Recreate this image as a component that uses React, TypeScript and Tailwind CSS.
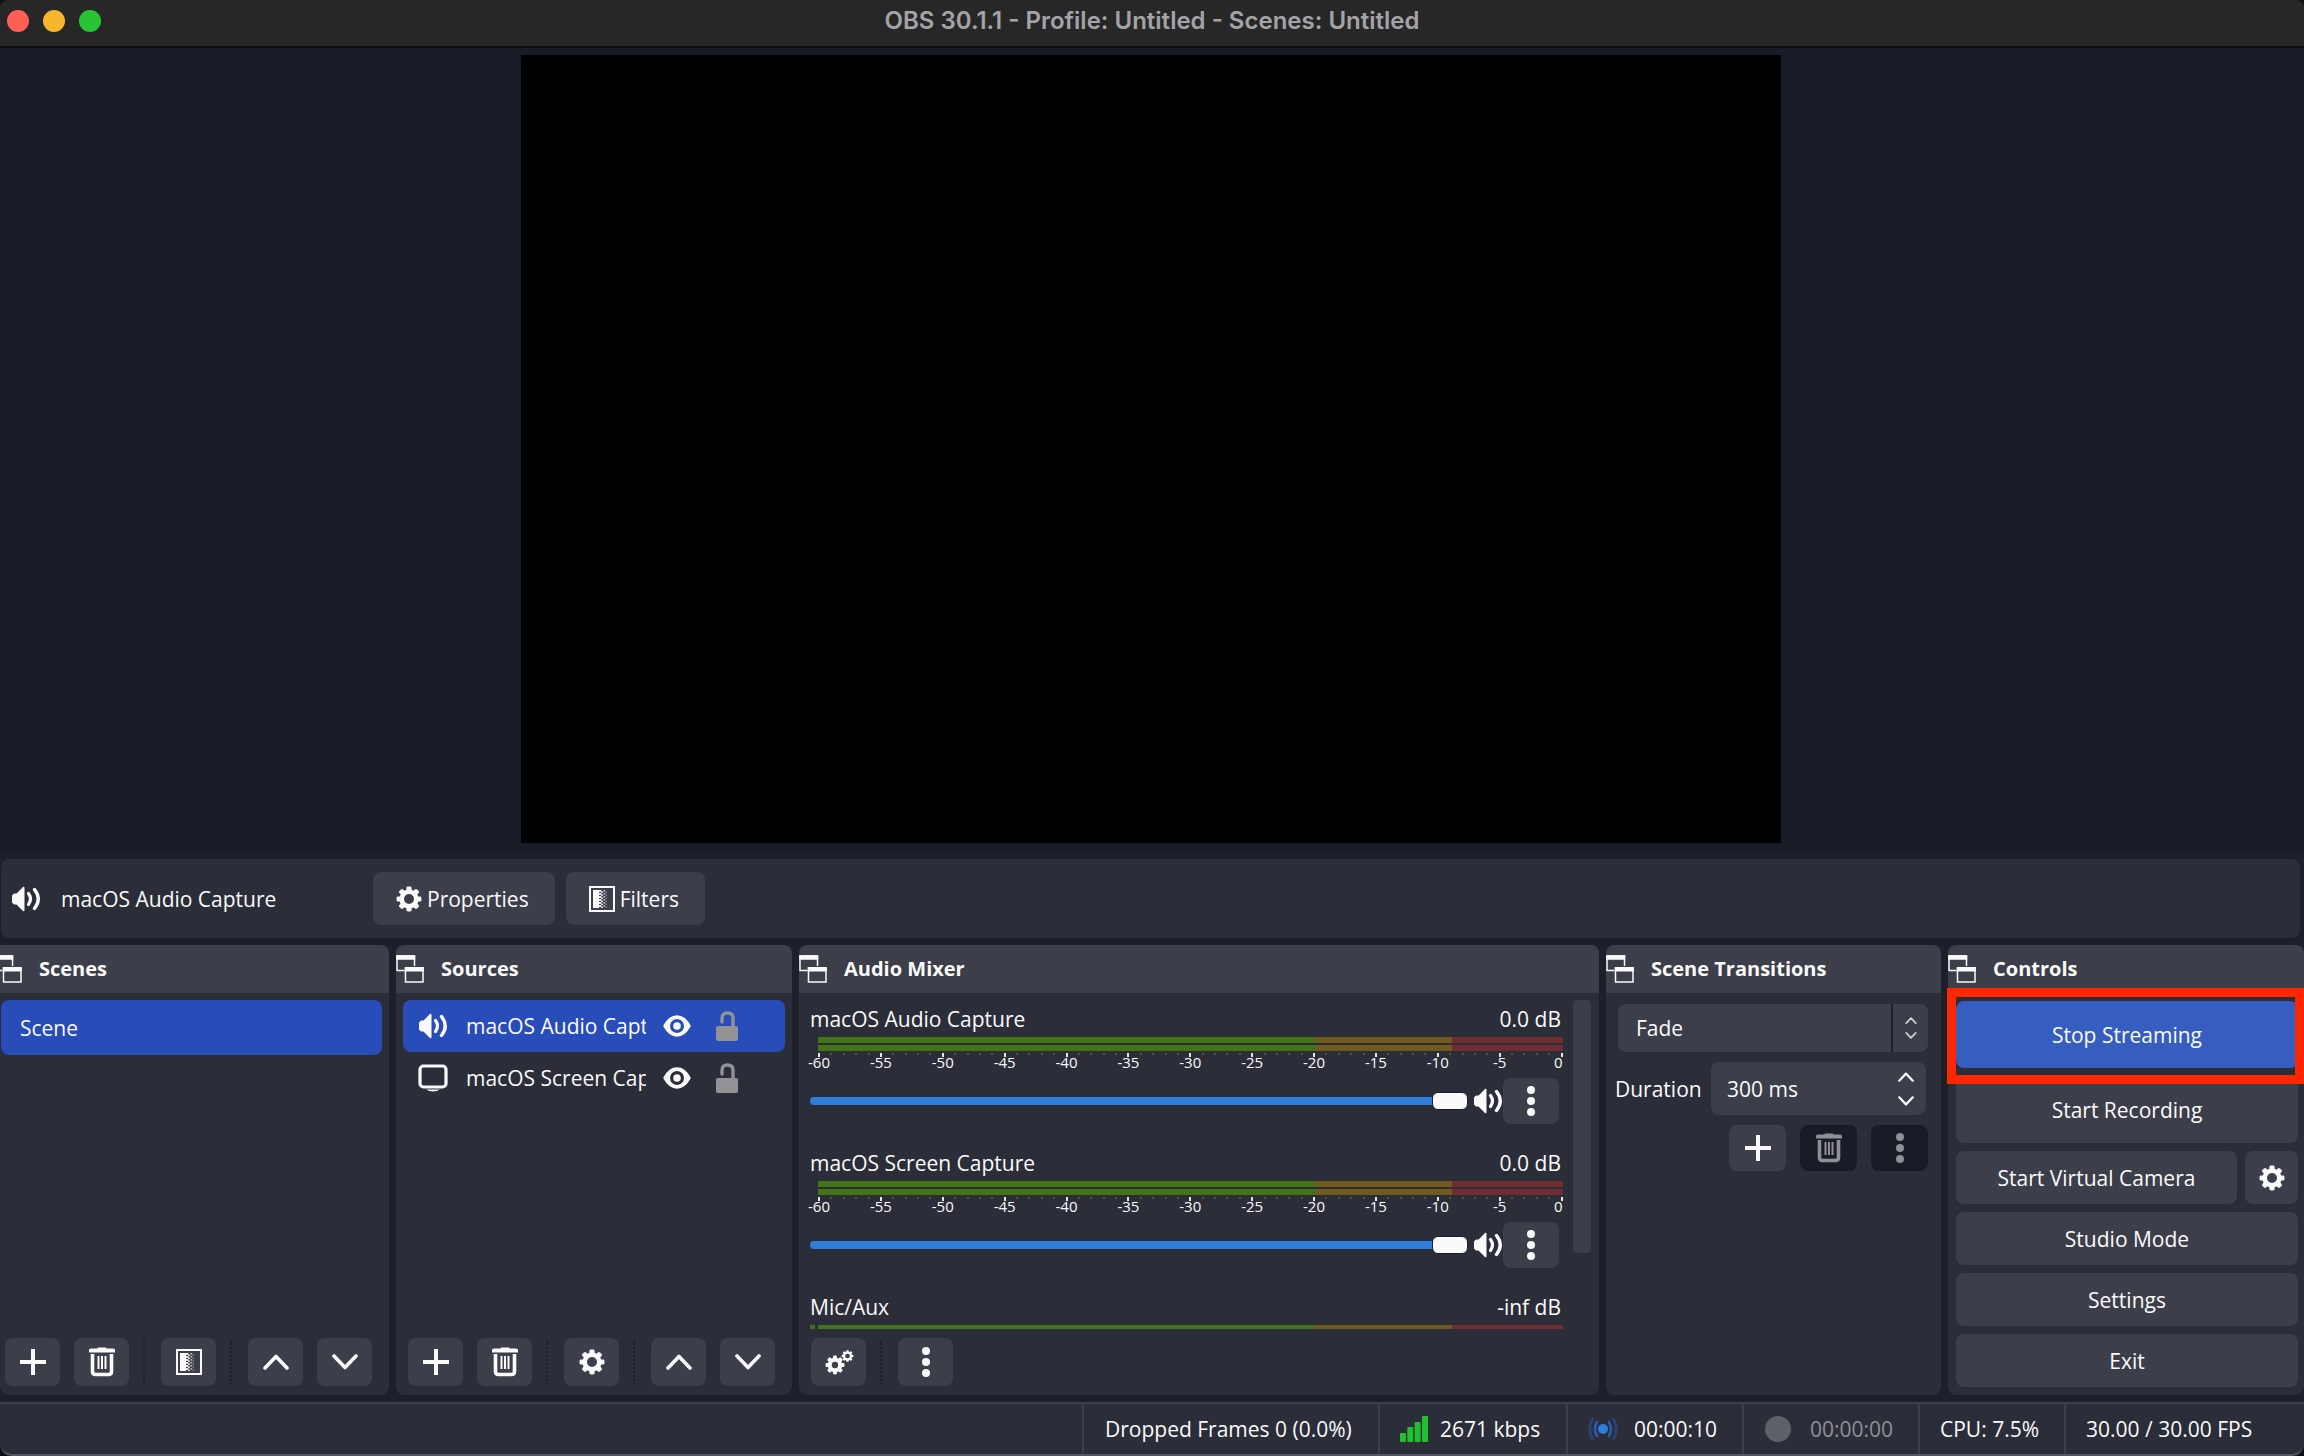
import { ReactNode } from "react";
import clsx from "clsx";

interface IconProps {
  className?: string;
}

interface GearShapeProps {
  cx: number;
  cy: number;
  scale: number;
  ring?: number;
}

function GearShape({ cx, cy, scale, ring = 4.6 }: GearShapeProps) {
  return (
    <g transform={`translate(${cx} ${cy}) scale(${scale})`}>
      <circle r={9.6 - ring / 2} fill="none" stroke="currentColor" strokeWidth={ring} />
      {[0, 45, 90, 135, 180, 225, 270, 315].map((angle) => (
        <rect
          key={angle}
          x="-2.6"
          y="-12.4"
          width="5.2"
          height="5"
          rx="1.4"
          fill="currentColor"
          transform={`rotate(${angle})`}
        />
      ))}
    </g>
  );
}

const GearIcon = ({ className = "size-[26px]" }: IconProps) => (
  <svg viewBox="0 0 26 26" className={className}>
    <GearShape cx={13} cy={13} scale={1} />
  </svg>
);

const GearsIcon = () => (
  <svg viewBox="0 0 30 26" className="h-[26px] w-[30px]">
    <GearShape cx={11} cy={16} scale={0.76} ring={5.4} />
    <GearShape cx={23.5} cy={7} scale={0.47} ring={4.6} />
  </svg>
);

const SpeakerIcon = () => (
  <svg viewBox="0 0 30 26" className="h-[26px] w-[30px] shrink-0" fill="none" stroke="currentColor">
    <path d="M1 9.5 3 7.5H5.5L12 1Q13.5 0 13.5 2V24Q13.5 26 12 25L5.5 18.5H3L1 16.5Z" fill="currentColor" stroke="none" />
    <path d="M17.5 7.5Q21.5 13 17.5 18.5" strokeWidth="3.2" strokeLinecap="round" />
    <path d="M23.5 3.5Q31 13 23.5 22.5" strokeWidth="3.4" strokeLinecap="round" />
  </svg>
);

const MonitorIcon = () => (
  <svg viewBox="0 0 30 28" className="h-7 w-[30px] shrink-0" fill="none" stroke="currentColor">
    <rect x="2" y="2" width="26" height="21" rx="3.5" strokeWidth="3.2" />
    <path d="M8 25.5H22Q19 27.5 15 27.5T8 25.5Z" fill="currentColor" stroke="none" />
  </svg>
);

const FilterIcon = () => (
  <svg viewBox="0 0 26 26" className="size-[26px]">
    <rect x="1" y="1" width="24" height="24" fill="none" stroke="currentColor" strokeWidth="2" />
    <rect x="4" y="4" width="6" height="18" fill="currentColor" />
    {[4, 7, 10, 13, 16, 19].map((y) => (
      <g key={y} fill="currentColor">
        <rect x="10" y={y} width="2.4" height="2" opacity=".9" />
        <rect x="12" y={y + 1.5} width="2" height="1.5" opacity=".8" />
        <rect x="14.4" y={y} width="1.8" height="1.6" opacity=".65" />
        <rect x="16.6" y={y + 1.5} width="1.4" height="1.4" opacity=".4" />
      </g>
    ))}
  </svg>
);

const TrashIcon = () => (
  <svg viewBox="0 0 28 30" className="h-[30px] w-7" fill="none" stroke="currentColor">
    <path d="M1 3Q1 1.5 3 1.5H9L10.5.5H17.5L19 1.5H25Q27 1.5 27 3V5.5H1Z" fill="currentColor" stroke="none" />
    <path d="M4.5 7V24.5Q4.5 27.5 7.5 27.5H20.5Q23.5 27.5 23.5 24.5V7" strokeWidth="3.6" />
    <path d="M10.5 9V22M14 9V22M17.5 9V22" strokeWidth="2" />
  </svg>
);

const EyeIcon = () => (
  <svg viewBox="0 0 28 22" className="h-[22px] w-7" fill="none" stroke="currentColor">
    <path d="M2 11Q7 2 14 2T26 11Q21 20 14 20T2 11Z" strokeWidth="3.4" strokeLinejoin="round" />
    <circle cx="14" cy="11" r="8.5" strokeWidth="3" />
    <circle cx="14" cy="11" r="3.8" fill="currentColor" stroke="none" />
  </svg>
);

const UnlockIcon = () => (
  <svg viewBox="0 0 22 30" className="h-[30px] w-[22px]" fill="none" stroke="currentColor">
    <rect x="0" y="15" width="22" height="15" rx="2" fill="currentColor" stroke="none" />
    <path d="M6 11V7Q6 2 11.5 2T17 7V16" strokeWidth="3.4" strokeLinecap="round" />
  </svg>
);

const PopoutIcon = ({ className }: IconProps) => (
  <svg viewBox="0 0 28 28" className={clsx("size-7 shrink-0", className)} fill="none" stroke="currentColor">
    <path d="M8.5 15.5H1V1H18.5V11" strokeWidth="1.5" />
    <path d="M.3 2.5H19.2" strokeWidth="4.5" />
    <rect x="9.5" y="13" width="17.5" height="14" strokeWidth="1.5" />
    <path d="M8.8 14.2H27.8" strokeWidth="4.5" />
  </svg>
);

const PlusIcon = () => (
  <svg viewBox="0 0 26 26" className="size-[26px]" stroke="currentColor" strokeWidth="4">
    <path d="M0 13H26M13 0V26" />
  </svg>
);

const DotsIcon = () => (
  <svg viewBox="0 0 8 30" className="h-[30px] w-2" fill="currentColor">
    <circle cx="4" cy="4" r="4" />
    <circle cx="4" cy="15" r="4" />
    <circle cx="4" cy="26" r="4" />
  </svg>
);

interface ChevronProps {
  direction: "up" | "down";
  className?: string;
}

const ChevronIcon = ({ direction, className = "h-4 w-[26px]" }: ChevronProps) => (
  <svg
    viewBox="0 0 26 16"
    className={className}
    fill="none"
    stroke="currentColor"
    strokeWidth="3.6"
    strokeLinecap="round"
    strokeLinejoin="round"
  >
    <path d={direction === "up" ? "M2 14 13 2.5 24 14" : "M2 2 13 13.5 24 2"} />
  </svg>
);

const SignalIcon = () => (
  <svg viewBox="0 0 28 26" className="h-[26px] w-7" fill="#22c02e">
    <rect x="0" y="17" width="6" height="9" rx="1" />
    <rect x="7.3" y="11" width="6" height="15" rx="1" />
    <rect x="14.6" y="6" width="6" height="20" rx="1" />
    <rect x="22" y="0" width="6" height="26" rx="1" />
  </svg>
);

const BroadcastIcon = () => (
  <svg viewBox="0 0 30 24" className="h-6 w-[30px]" fill="none" strokeLinecap="round">
    <circle cx="15" cy="12" r="5" fill="#2e7fdb" />
    <path d="M9 5Q5 12 9 19M21 5Q25 12 21 19" stroke="#2d59b4" strokeWidth="2.6" />
    <path d="M4.5 2Q-1 12 4.5 22M25.5 2Q31 12 25.5 22" stroke="#2b4270" strokeWidth="3" />
  </svg>
);

interface DockProps {
  title: string;
  docked?: boolean;
  children: ReactNode;
}

function Dock({ title, docked, children }: DockProps) {
  return (
    <section className="flex min-h-0 min-w-0 flex-col rounded-lg bg-[#2b2d38]">
      <h2
        className={clsx(
          "flex h-12 shrink-0 items-center gap-[17px] overflow-hidden bg-[#3c3f4a] text-[20px] font-bold",
          docked ? "rounded-tr-lg" : "rounded-t-lg"
        )}
      >
        <PopoutIcon className={docked ? "-ml-1.5" : undefined} />
        {title}
      </h2>
      {children}
    </section>
  );
}

interface ToolButtonProps {
  label: string;
  disabled?: boolean;
  children: ReactNode;
}

function ToolButton({ label, disabled, children }: ToolButtonProps) {
  return (
    <button
      aria-label={label}
      disabled={disabled}
      className="flex h-12 w-[55px] shrink-0 items-center justify-center rounded-lg bg-[#3c3f4a] disabled:bg-[#191b26] disabled:text-[#8f9095]"
    >
      {children}
    </button>
  );
}

const Separator = () => <span className="h-11 w-1 shrink-0 border-l-2 border-dotted border-[#1d1f2a]" />;

interface ListToolbarProps {
  className: string;
  middle: ReactNode;
  middleLabel: string;
}

function ListToolbar({ className, middle, middleLabel }: ListToolbarProps) {
  return (
    <div className={clsx("mt-auto flex items-center gap-3.5 pb-[9px]", className)}>
      <ToolButton label="Add"><PlusIcon /></ToolButton>
      <ToolButton label="Remove"><TrashIcon /></ToolButton>
      <Separator />
      <ToolButton label={middleLabel}>{middle}</ToolButton>
      <Separator />
      <ToolButton label="Move up"><ChevronIcon direction="up" /></ToolButton>
      <ToolButton label="Move down"><ChevronIcon direction="down" /></ToolButton>
    </div>
  );
}

interface SourceRowProps {
  name: string;
  icon: ReactNode;
  selected?: boolean;
}

function SourceRow({ name, icon, selected }: SourceRowProps) {
  return (
    <li className={clsx("flex h-[52px] items-center rounded-lg pl-[15px]", selected && "bg-[#284cb8]")}>
      {icon}
      <span className="ml-[18px] w-[180px] overflow-hidden whitespace-nowrap">{name}</span>
      <button aria-label={`Hide ${name}`} className="ml-[17px]"><EyeIcon /></button>
      <button aria-label={`Lock ${name}`} className="ml-[25px] text-[#929297]"><UnlockIcon /></button>
    </li>
  );
}

const MeterBar = () => (
  <div className="flex h-1.5">
    <div className="grow-[497] bg-[#437518]" />
    <div className="grow-[137] bg-[#705a1c]" />
    <div className="grow-[111] bg-[#702b33]" />
  </div>
);

const ticks = Array.from({ length: 61 }, (_, i) => i - 60);

const MeterScale = () => (
  <div className="flex h-[25px] justify-between text-[15px] leading-[10px]">
    {ticks.map((db) => {
      const major = db % 5 === 0;
      return (
        <span key={db} className={clsx("flex w-0.5 flex-col", db === 0 ? "items-end" : "items-center")}>
          <span className={clsx("w-0.5 shrink-0", major ? "h-1 bg-[#e6e6e8]" : "h-0.5 bg-[#50525b]")} />
          {major && <span>{db}</span>}
        </span>
      );
    })}
  </div>
);

interface MixerChannelProps {
  name: string;
  level: string;
  muted?: boolean;
}

function MixerChannel({ name, level, muted }: MixerChannelProps) {
  return (
    <div className="h-36 shrink-0">
      <div className="flex h-[30px] items-center justify-between pr-0.5">
        <span>{name}</span>
        <span>{level}</span>
      </div>
      <div className="mt-[3px] flex gap-[3px]">
        <div className={clsx("h-3.5 w-[5px]", muted && "bg-[#437518]")} />
        <div className="flex grow flex-col gap-0.5">
          <MeterBar />
          <MeterBar />
          <MeterScale />
        </div>
      </div>
      <div className="flex items-center pr-1">
        <input
          type="range"
          aria-label={`${name} volume`}
          defaultValue={100}
          className="mr-[5px] h-2 min-w-0 grow appearance-none rounded-full bg-[#2e7fdb] [&::-webkit-slider-thumb]:h-[18px] [&::-webkit-slider-thumb]:w-9 [&::-webkit-slider-thumb]:appearance-none [&::-webkit-slider-thumb]:rounded-md [&::-webkit-slider-thumb]:border [&::-webkit-slider-thumb]:border-[#1b1d28] [&::-webkit-slider-thumb]:bg-[#fafafa]"
        />
        <button aria-label={`Mute ${name}`}><SpeakerIcon /></button>
        <button
          aria-label={`${name} options`}
          className="flex h-[46px] w-14 items-center justify-center rounded-lg bg-[#3c3f4a]"
        >
          <DotsIcon />
        </button>
      </div>
    </div>
  );
}

interface ControlButtonProps {
  className?: string;
  children: ReactNode;
}

const ControlButton = ({ className = "h-[53px] bg-[#3c3f4a]", children }: ControlButtonProps) => (
  <button className={clsx("w-full rounded-lg", className)}>{children}</button>
);

function ContextBar() {
  return (
    <div className="mx-px mt-1.5 mr-1 flex h-[79px] items-center rounded-lg bg-[#2b2d38] pl-2.5">
      <SpeakerIcon />
      <span className="ml-5 w-[312px]">macOS Audio Capture</span>
      <button className="flex h-[53px] items-center gap-[5px] rounded-lg bg-[#3c3f4a] pr-[26px] pl-[23px]">
        <GearIcon />
        Properties
      </button>
      <button className="ml-[11px] flex h-[53px] items-center gap-[5px] rounded-lg bg-[#3c3f4a] pr-[26px] pl-[23px]">
        <FilterIcon />
        Filters
      </button>
    </div>
  );
}

function Transitions() {
  return (
    <div className="flex flex-col pt-[11px] pr-[13px] pl-[9px]">
      <div className="relative ml-[3px] flex">
        <select
          aria-label="Scene transition"
          className="h-12 w-full appearance-none rounded-lg bg-[#3c3f4a] pl-[18px]"
        >
          <option>Fade</option>
        </select>
        <span className="pointer-events-none absolute inset-y-0 right-0 flex w-[37px] flex-col items-center justify-center gap-2 border-l-2 border-[#1d1f2a] text-[#d5d5d8]">
          <ChevronIcon direction="up" className="h-[7px] w-3" />
          <ChevronIcon direction="down" className="h-[7px] w-3" />
        </span>
      </div>
      <div className="mt-2.5 mr-0.5 flex items-center justify-between">
        <label htmlFor="duration">Duration</label>
        <div className="flex h-[53px] w-[215px] items-center rounded-lg bg-[#3c3f4a] pr-3 pl-4">
          <input id="duration" defaultValue="300 ms" className="min-w-0 grow bg-transparent" />
          <div className="flex flex-col gap-3.5">
            <button aria-label="Increase duration"><ChevronIcon direction="up" className="block h-2.5 w-4" /></button>
            <button aria-label="Decrease duration"><ChevronIcon direction="down" className="block h-2.5 w-4" /></button>
          </div>
        </div>
      </div>
      <div className="mt-2.5 flex justify-end gap-3.5 *:h-[46px] *:w-[57px]">
        <ToolButton label="Add transition"><PlusIcon /></ToolButton>
        <ToolButton label="Remove transition" disabled><TrashIcon /></ToolButton>
        <ToolButton label="Transition options" disabled><DotsIcon /></ToolButton>
      </div>
    </div>
  );
}

function Controls() {
  return (
    <div className="flex flex-col gap-2 pt-2 pr-1.5 pl-2">
      <div className="relative flex">
        <ControlButton className="h-[67px] bg-[#355ec0]">Stop Streaming</ControlButton>
        <span className="pointer-events-none absolute -top-[13px] -right-1.5 -bottom-4 -left-[9px] border-[9px] border-[#ff2600]" />
      </div>
      <ControlButton className="h-[67px] bg-[#3c3f4a]">Start Recording</ControlButton>
      <div className="flex gap-2">
        <ControlButton>Start Virtual Camera</ControlButton>
        <button
          aria-label="Configure virtual camera"
          className="flex w-[53px] shrink-0 items-center justify-center rounded-lg bg-[#3c3f4a]"
        >
          <GearIcon />
        </button>
      </div>
      <ControlButton>Studio Mode</ControlButton>
      <ControlButton>Settings</ControlButton>
      <ControlButton>Exit</ControlButton>
    </div>
  );
}

function StatusBar() {
  return (
    <footer className="mt-[7px] flex h-[54px] justify-end rounded-b-xl border-y-2 border-t-[#3c3f4a] border-b-[#55575f] bg-[#2b2d38] *:flex *:items-center *:border-l-2 *:border-[#3c3f4a]">
      <div className="w-[296px] pl-[21px]">Dropped Frames 0 (0.0%)</div>
      <div className="w-[188px] gap-3 pl-5">
        <SignalIcon />
        2671 kbps
      </div>
      <div className="w-[176px] gap-4 pl-5">
        <BroadcastIcon />
        00:00:10
      </div>
      <div className="w-[176px] gap-[19px] pl-[21px] text-[#8f9095]">
        <span className="size-[26px] rounded-full bg-[#5f6168]" />
        00:00:00
      </div>
      <div className="w-[146px] pl-5">CPU: 7.5%</div>
      <div className="w-[240px] pl-5">30.00 / 30.00 FPS</div>
    </footer>
  );
}

export default function App() {
  return (
    <div className="bg-[#101014]">
      <div className="flex min-h-screen flex-col overflow-hidden rounded-t-lg rounded-b-xl bg-[#1d1f2a] font-['Open_Sans','Noto_Sans',sans-serif] text-[21px] leading-7 text-[#fafafa]">
        <header className="flex h-12 shrink-0 items-center border-b-2 border-[#0c0d13] bg-[#272727] px-[7px] pb-1">
          <div className="flex flex-1 gap-3.5">
            <button aria-label="Close" className="size-[22px] rounded-full bg-[#ff5f57]" />
            <button aria-label="Minimize" className="size-[22px] rounded-full bg-[#f8b62c]" />
            <button aria-label="Zoom" className="size-[22px] rounded-full bg-[#28c435]" />
          </div>
          <h1 className="font-['Inter',sans-serif] text-[24px] font-semibold text-[#a3a3a8]">
            OBS 30.1.1 - Profile: Untitled - Scenes: Untitled
          </h1>
          <div className="flex-1" />
        </header>

        <main className="flex grow items-start justify-center bg-[#191b26] pt-[7px] pr-0.5 pb-2.5">
          <div className="aspect-[8/5] w-[54.75%] bg-black" />
        </main>

        <ContextBar />

        <div className="mt-[7px] grid h-[450px] shrink-0 grid-cols-[389fr_396fr_800fr_335fr_356fr] grid-rows-[minmax(0,1fr)] gap-[7px]">
          <Dock title="Scenes" docked>
            <ul className="pt-[7px] pr-[7px] pl-px">
              <li className="flex h-[55px] items-center rounded-lg bg-[#284cb8] pl-[19px]">Scene</li>
            </ul>
            <ListToolbar className="pl-[5px]" middle={<FilterIcon />} middleLabel="Filters" />
          </Dock>

          <Dock title="Sources">
            <ul className="px-[7px] pt-[7px]">
              <SourceRow name="macOS Audio Capture" icon={<SpeakerIcon />} selected />
              <SourceRow name="macOS Screen Capture" icon={<MonitorIcon />} />
            </ul>
            <ListToolbar className="pl-3" middle={<GearIcon />} middleLabel="Source properties" />
          </Dock>

          <Dock title="Audio Mixer">
            <div className="flex min-h-0 grow gap-2.5 overflow-hidden pr-2 pl-[11px]">
              <div className="flex min-w-0 grow flex-col pt-[11px]">
                <MixerChannel name="macOS Audio Capture" level="0.0 dB" />
                <MixerChannel name="macOS Screen Capture" level="0.0 dB" />
                <MixerChannel name="Mic/Aux" level="-inf dB" muted />
              </div>
              <div className="mt-[7px] h-[253px] w-[18px] shrink-0 rounded bg-[#3c3f4a]" />
            </div>
            <div className="flex shrink-0 items-center gap-3.5 pt-[9px] pb-[9px] pl-3">
              <ToolButton label="Advanced audio properties"><GearsIcon /></ToolButton>
              <Separator />
              <ToolButton label="Audio mixer menu"><DotsIcon /></ToolButton>
            </div>
          </Dock>

          <Dock title="Scene Transitions">
            <Transitions />
          </Dock>

          <Dock title="Controls">
            <Controls />
          </Dock>
        </div>

        <StatusBar />
      </div>
    </div>
  );
}
